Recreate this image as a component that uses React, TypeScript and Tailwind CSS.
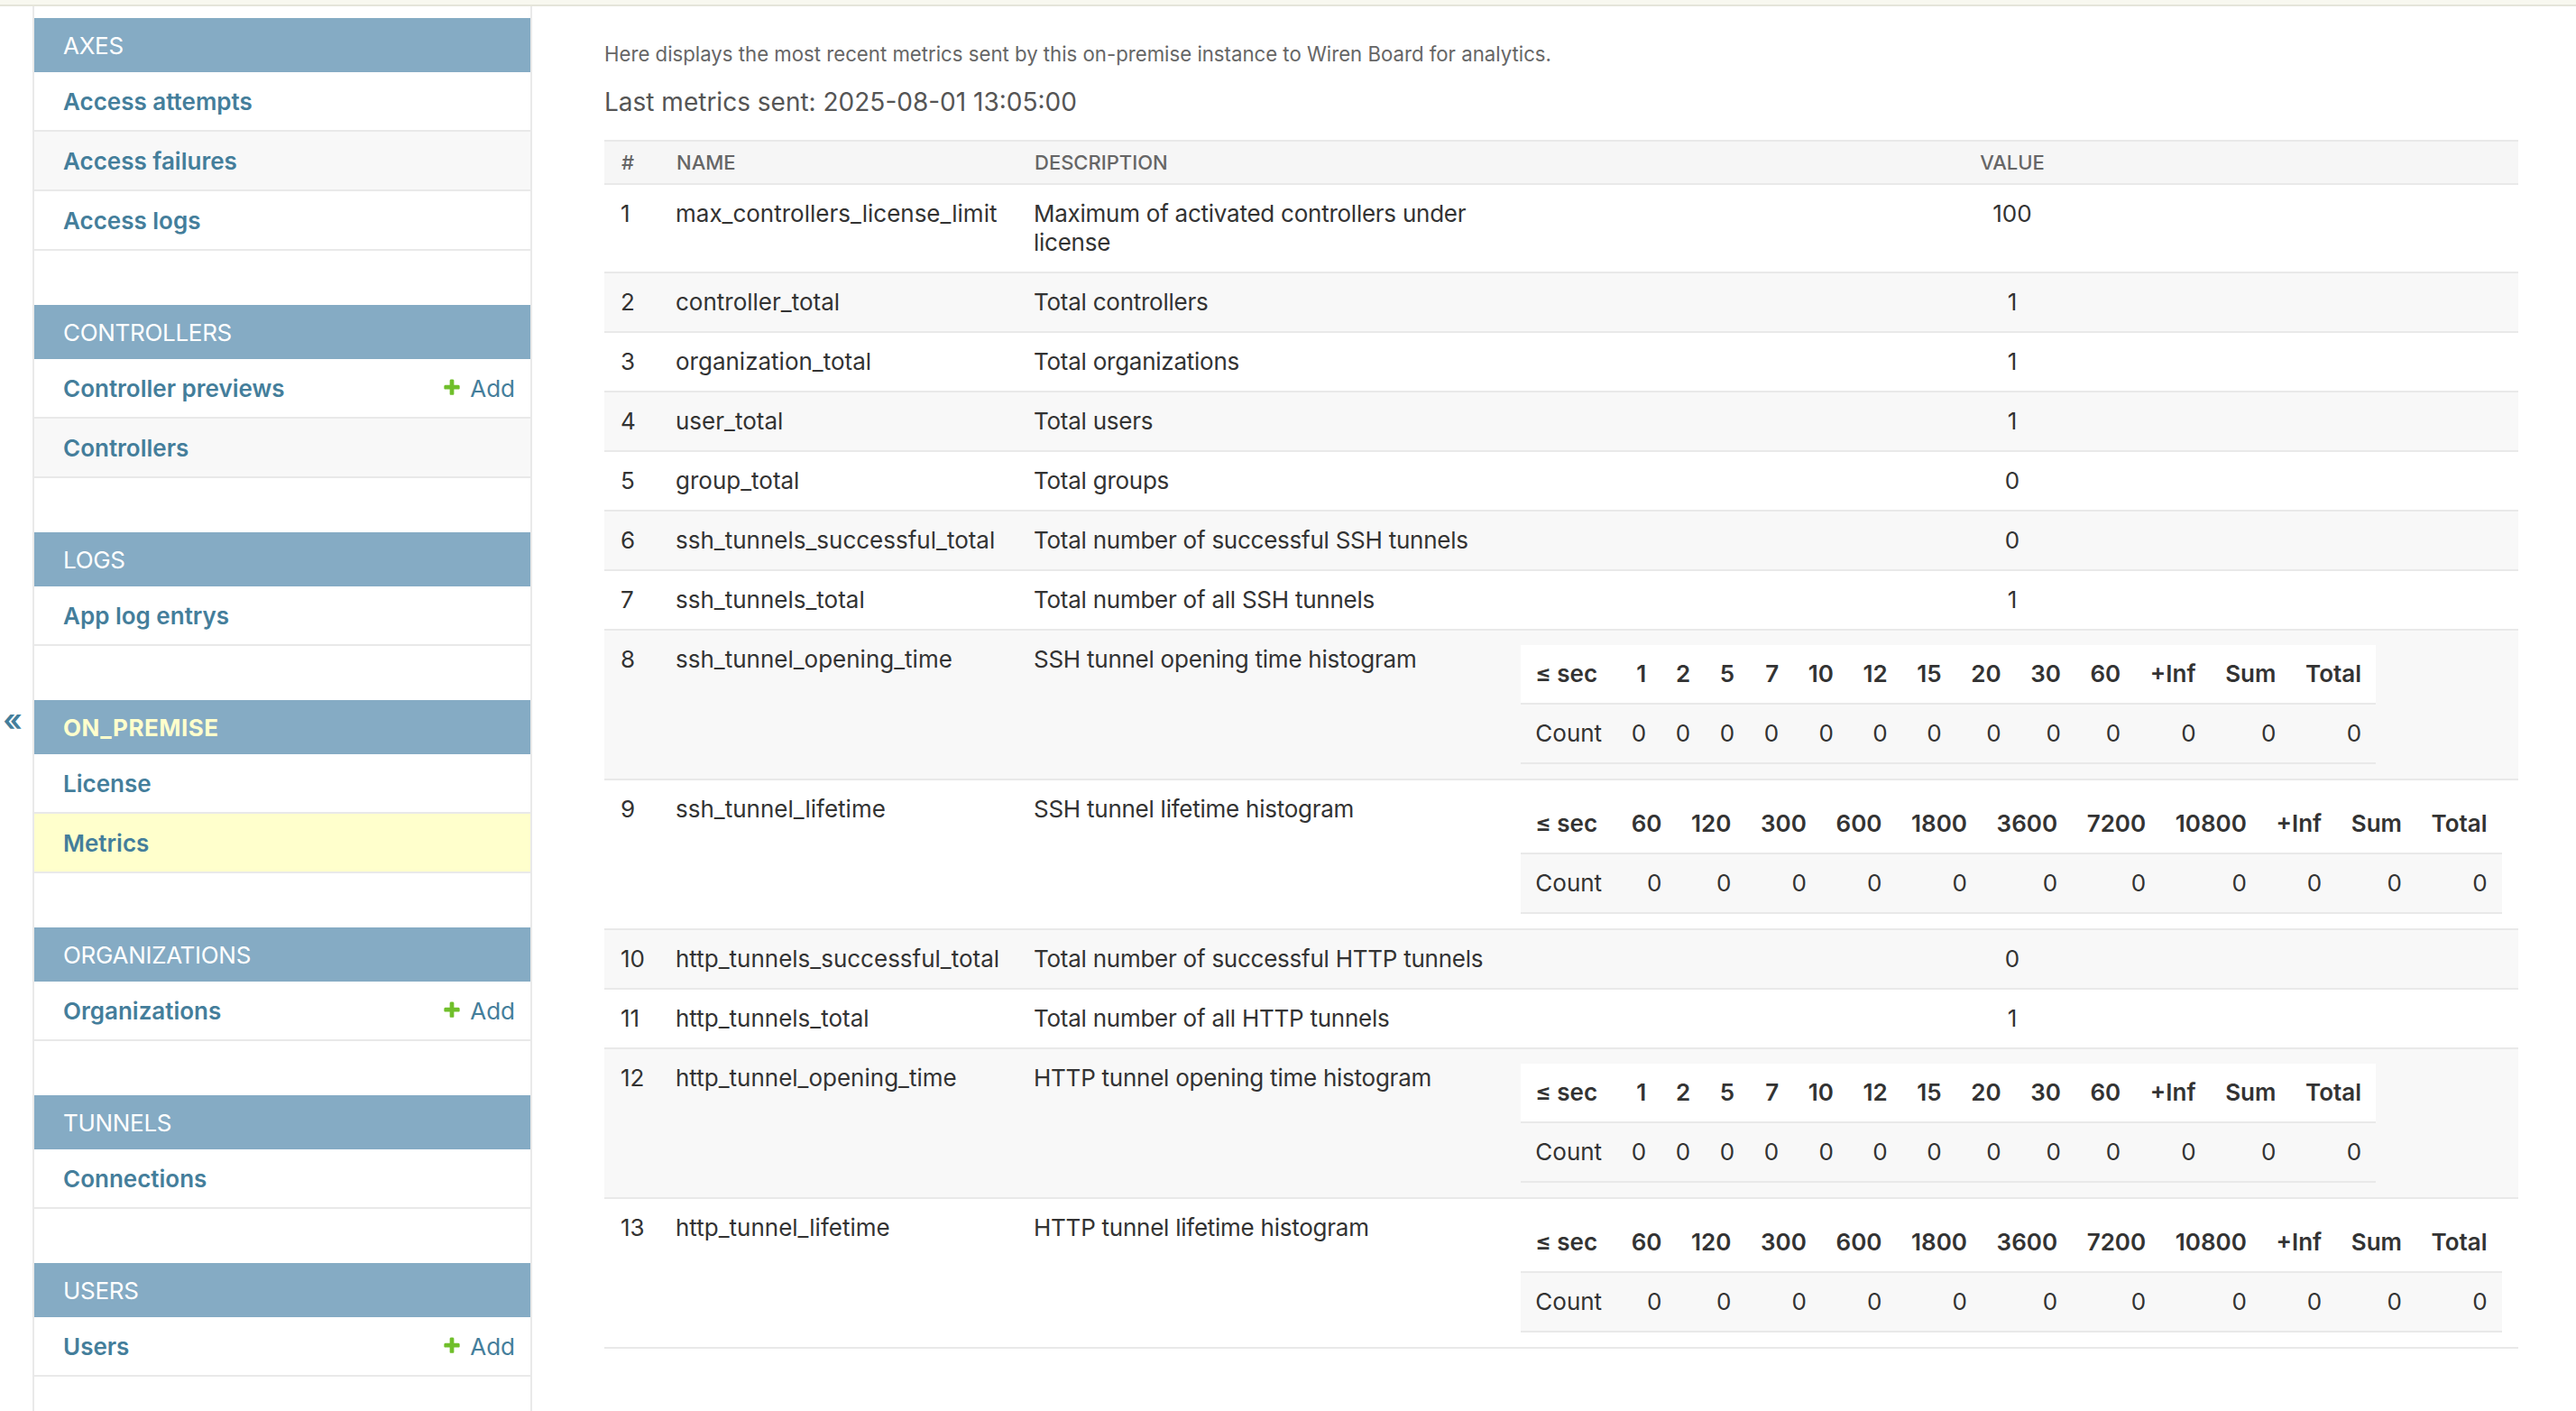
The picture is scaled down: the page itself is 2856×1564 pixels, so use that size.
import React from 'react';

type NavRow = { label: string; add?: boolean; active?: boolean };
type Module = { title: string; current?: boolean; rows: NavRow[] };

const modules: Module[] = [
  { title: 'Axes', rows: [{ label: 'Access attempts' }, { label: 'Access failures' }, { label: 'Access logs' }] },
  { title: 'Controllers', rows: [{ label: 'Controller previews', add: true }, { label: 'Controllers' }] },
  { title: 'Logs', rows: [{ label: 'App log entrys' }] },
  { title: 'On_premise', current: true, rows: [{ label: 'License' }, { label: 'Metrics', active: true }] },
  { title: 'Organizations', rows: [{ label: 'Organizations', add: true }] },
  { title: 'Tunnels', rows: [{ label: 'Connections' }] },
  { title: 'Users', rows: [{ label: 'Users', add: true }] },
];

const histA = ['1', '2', '5', '7', '10', '12', '15', '20', '30', '60', '+Inf', 'Sum', 'Total'];
const histB = ['60', '120', '300', '600', '1800', '3600', '7200', '10800', '+Inf', 'Sum', 'Total'];

type Metric = { n: number; name: string; desc: string; value?: string; hist?: string[] };

const metrics: Metric[] = [
  { n: 1, name: 'max_controllers_license_limit', desc: 'Maximum of activated controllers under license', value: '100' },
  { n: 2, name: 'controller_total', desc: 'Total controllers', value: '1' },
  { n: 3, name: 'organization_total', desc: 'Total organizations', value: '1' },
  { n: 4, name: 'user_total', desc: 'Total users', value: '1' },
  { n: 5, name: 'group_total', desc: 'Total groups', value: '0' },
  { n: 6, name: 'ssh_tunnels_successful_total', desc: 'Total number of successful SSH tunnels', value: '0' },
  { n: 7, name: 'ssh_tunnels_total', desc: 'Total number of all SSH tunnels', value: '1' },
  { n: 8, name: 'ssh_tunnel_opening_time', desc: 'SSH tunnel opening time histogram', hist: histA },
  { n: 9, name: 'ssh_tunnel_lifetime', desc: 'SSH tunnel lifetime histogram', hist: histB },
  { n: 10, name: 'http_tunnels_successful_total', desc: 'Total number of successful HTTP tunnels', value: '0' },
  { n: 11, name: 'http_tunnels_total', desc: 'Total number of all HTTP tunnels', value: '1' },
  { n: 12, name: 'http_tunnel_opening_time', desc: 'HTTP tunnel opening time histogram', hist: histA },
  { n: 13, name: 'http_tunnel_lifetime', desc: 'HTTP tunnel lifetime histogram', hist: histB },
];

function PlusIcon() {
  return (
    <svg width="22" height="22" viewBox="0 0 1792 1792" aria-hidden="true">
      <path
        fill="#70bf2b"
        d="M1600 736v192q0 40-28 68t-68 28h-416v416q0 40-28 68t-68 28h-192q-40 0-68-28t-28-68v-416h-416q-40 0-68-28t-28-68v-192q0-40 28-68t68-28h416v-416q0-40 28-68t68-28h192q40 0 68 28t28 68v416h416q40 0 68 28t28 68z"
      />
    </svg>
  );
}

function Histogram({ buckets }: { buckets: string[] }) {
  return (
    <table className="border-collapse text-[26px] leading-[32px] text-[#333]">
      <tbody>
        <tr className="bg-white border-b-2 border-[#e9e9e9]">
          <th className="px-[16.3px] py-[16px] text-left font-semibold whitespace-nowrap">≤ sec</th>
          {buckets.map((b) => (
            <th key={b} className="px-[16.3px] py-[16px] text-right font-semibold whitespace-nowrap">
              {b}
            </th>
          ))}
        </tr>
        <tr className="bg-[#f8f8f8] border-b-2 border-[#e9e9e9]">
          <td className="px-[16.3px] py-[16px] text-left">Count</td>
          {buckets.map((b) => (
            <td key={b} className="px-[16.3px] py-[16px] text-right">
              0
            </td>
          ))}
        </tr>
      </tbody>
    </table>
  );
}

export default function App() {
  return (
    <div className="w-[2856px] h-[1564px] overflow-hidden bg-white font-['Inter','Noto_Sans',sans-serif] text-[#333]">
      <div className="h-[7px] bg-[#f8f8f0] border-b-2 border-[#e5e5da]" />
      <div className="flex h-[1557px]">
        <div className="w-[36px] shrink-0 flex flex-col justify-center items-center pt-[24px] pr-[8px]">
          <span className="text-[#447e9b] text-[34px] leading-none font-semibold">«</span>
        </div>
        <nav className="w-[554px] shrink-0 border-x-2 border-[#e9e9e9] pt-[13px]">
          {modules.map((m) => (
            <div key={m.title} className="mb-[60px]">
              <div
                className={`h-[60px] bg-[#85abc4] flex items-center pl-[32px] text-[26px] uppercase ${
                  m.current ? 'text-[#ffffcc] font-bold tracking-[0.5px]' : 'text-white tracking-[-0.3px]'
                }`}
              >
                {m.title}
              </div>
              {m.rows.map((r, i) => (
                <div
                  key={r.label}
                  className={`h-[66px] border-b-2 border-[#e9e9e9] flex items-center justify-between pl-[32px] pr-[17px] text-[26px] ${
                    r.active ? 'bg-[#ffffcc]' : i % 2 === 1 ? 'bg-[#f8f8f8]' : 'bg-white'
                  }`}
                >
                  <span className="font-semibold text-[#447e9b]">{r.label}</span>
                  {r.add && (
                    <span className="flex items-center gap-[9px] text-[#447e9b]">
                      <PlusIcon />
                      Add
                    </span>
                  )}
                </div>
              ))}
            </div>
          ))}
        </nav>
        <main className="flex-1 pl-[80px] pr-[64px] pt-[37px]">
          <p className="text-[22.2px] leading-[32px] text-[#666]">
            Here displays the most recent metrics sent by this on-premise instance to Wiren Board for analytics.
          </p>
          <p className="mt-[19px] text-[28px] leading-[36px] text-[#555]">Last metrics sent: 2025-08-01 13:05:00</p>
          <table className="mt-[24px] w-[2122px] table-fixed border-collapse text-[26px] leading-[32px] text-[#333]">
            <colgroup>
              <col className="w-[61px]" />
              <col className="w-[397px]" />
              <col className="w-[542px]" />
              <col />
            </colgroup>
            <thead>
              <tr className="bg-[#f6f6f6] border-y-2 border-[#e9e9e9] text-[22px] leading-[26px] text-[#666] uppercase">
                <th className="px-[19px] py-[10px] text-left font-medium">#</th>
                <th className="px-[19px] py-[10px] text-left font-medium">Name</th>
                <th className="px-[19px] py-[10px] text-left font-medium">Description</th>
                <th className="px-[16px] py-[10px] text-center font-medium">Value</th>
              </tr>
            </thead>
            <tbody>
              {metrics.map((m, i) => (
                <tr
                  key={m.n}
                  className={`border-b-2 border-[#e9e9e9] ${i % 2 === 1 ? 'bg-[#f8f8f8]' : 'bg-white'}`}
                >
                  <td className="px-[18px] py-[16px] align-top">{m.n}</td>
                  <td className="px-[18px] py-[16px] align-top whitespace-nowrap">{m.name}</td>
                  <td className="px-[18px] py-[16px] align-top tracking-[-0.25px]">{m.desc}</td>
                  <td className="px-[16px] py-[16px] align-top text-center">
                    {m.hist ? <Histogram buckets={m.hist} /> : m.value}
                  </td>
                </tr>
              ))}
            </tbody>
          </table>
        </main>
      </div>
    </div>
  );
}
